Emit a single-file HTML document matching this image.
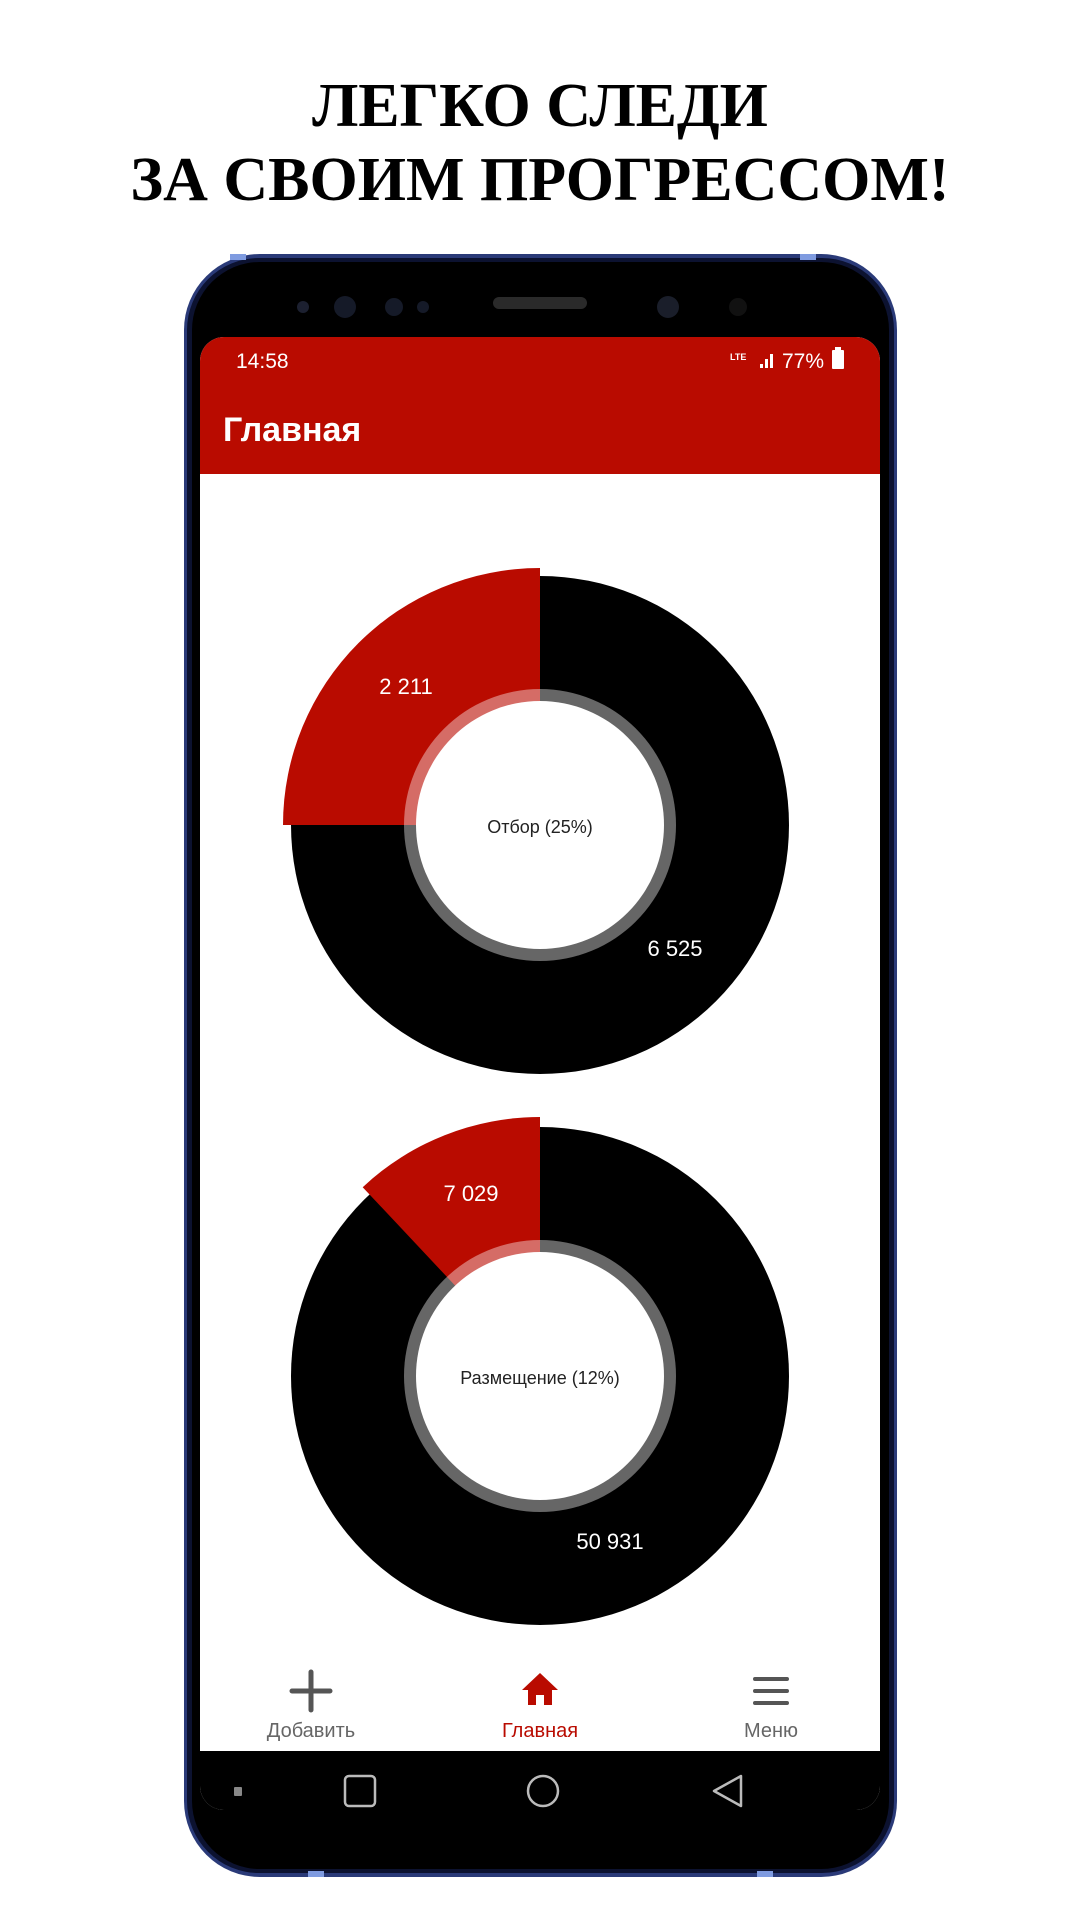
<!DOCTYPE html>
<html><head><meta charset="utf-8"><style>
html,body{margin:0;padding:0;background:#fff;width:1080px;height:1920px;overflow:hidden}
svg{display:block}
</style></head><body>
<svg width="1080" height="1920" viewBox="0 0 1080 1920" xmlns="http://www.w3.org/2000/svg">
<text x="540" y="126" text-anchor="middle" font-family="Liberation Serif, serif" font-weight="bold" font-size="62" fill="#000">ЛЕГКО СЛЕДИ</text>
<text x="540" y="200" text-anchor="middle" font-family="Liberation Serif, serif" font-weight="bold" font-size="62" fill="#000">ЗА СВОИМ ПРОГРЕССОМ!</text>

<rect x="184" y="254" width="713" height="1623" rx="76" fill="#2a3a78"/>
<rect x="187" y="258" width="707" height="1615" rx="72" fill="#0c1230"/>
<rect x="192" y="262" width="697" height="1607" rx="68" fill="#000"/>
<rect x="230" y="254" width="16" height="6" fill="#7f9be0"/>
<rect x="800" y="254" width="16" height="6" fill="#7f9be0"/>
<rect x="308" y="1871" width="16" height="6" fill="#7f9be0"/>
<rect x="757" y="1871" width="16" height="6" fill="#7f9be0"/>
<circle cx="303" cy="307" r="6" fill="#1c2030"/>
<circle cx="345" cy="307" r="11" fill="#151a28"/>
<circle cx="394" cy="307" r="9" fill="#151a28"/>
<circle cx="423" cy="307" r="6" fill="#151a28"/>
<rect x="493" y="297" width="94" height="12" rx="6" fill="#2a2a2a"/>
<circle cx="668" cy="307" r="11" fill="#1a1e2a"/>
<circle cx="738" cy="307" r="9" fill="#111"/>

<defs><clipPath id="scr"><rect x="200" y="337" width="680" height="1473" rx="24"/></clipPath></defs>
<g clip-path="url(#scr)">
<rect x="200" y="337" width="680" height="1473" fill="#fff"/>
<rect x="200" y="337" width="680" height="137" fill="#b90b00"/>
<rect x="200" y="1751" width="680" height="60" fill="#000"/>
</g>
<text x="236" y="368" font-family="Liberation Sans, sans-serif" font-size="21" fill="#fff">14:58</text>
<text x="730" y="360" font-family="Liberation Sans, sans-serif" font-size="9" font-weight="bold" fill="#fff">LTE</text>
<path d="M760 368h3v-4h-3zM765 368h3v-9h-3zM770 368h3v-14h-3z" fill="#fff"/>
<text x="782" y="368" font-family="Liberation Sans, sans-serif" font-size="21" fill="#fff">77%</text>
<rect x="832" y="350" width="12" height="19" rx="1" fill="#fff"/><rect x="835" y="347" width="6" height="4" fill="#fff"/>
<text x="223" y="441" font-family="Liberation Sans, sans-serif" font-weight="bold" font-size="34" fill="#fff">Главная</text>

<circle cx="540" cy="825" r="249" fill="#000"/>
<path d="M540 825 L540 568 A257 257 0 0 0 283 825 Z" fill="#b90b00"/>
<circle cx="540" cy="825" r="136" fill="#fff" fill-opacity="0.4"/>
<circle cx="540" cy="825" r="124" fill="#fff"/>
<text x="406" y="694" text-anchor="middle" font-family="Liberation Sans, sans-serif" font-size="22" fill="#fff">2 211</text>
<text x="675" y="956" text-anchor="middle" font-family="Liberation Sans, sans-serif" font-size="22" fill="#fff">6 525</text>
<text x="540" y="833" text-anchor="middle" font-family="Liberation Sans, sans-serif" font-size="18" fill="#222">Отбор (25%)</text>

<circle cx="540" cy="1376" r="249" fill="#000"/>
<path d="M540 1376 L540 1117 A259 259 0 0 0 362.7 1187.2 Z" fill="#b90b00"/>
<circle cx="540" cy="1376" r="136" fill="#fff" fill-opacity="0.4"/>
<circle cx="540" cy="1376" r="124" fill="#fff"/>
<text x="471" y="1201" text-anchor="middle" font-family="Liberation Sans, sans-serif" font-size="22" fill="#fff">7 029</text>
<text x="610" y="1549" text-anchor="middle" font-family="Liberation Sans, sans-serif" font-size="22" fill="#fff">50 931</text>
<text x="540" y="1384" text-anchor="middle" font-family="Liberation Sans, sans-serif" font-size="18" fill="#222">Размещение (12%)</text>

<path d="M311 1672v38M292 1691h38" stroke="#555" stroke-width="5" stroke-linecap="round"/>
<path d="M540 1673l-18 17h6v15h8v-10h8v10h8v-15h6z" fill="#b90b00"/>
<path d="M755 1679h32M755 1691h32M755 1703h32" stroke="#555" stroke-width="4" stroke-linecap="round"/>
<text x="311" y="1737" text-anchor="middle" font-family="Liberation Sans, sans-serif" font-size="20" fill="#666">Добавить</text>
<text x="540" y="1737" text-anchor="middle" font-family="Liberation Sans, sans-serif" font-size="20" fill="#b90b00">Главная</text>
<text x="771" y="1737" text-anchor="middle" font-family="Liberation Sans, sans-serif" font-size="20" fill="#666">Меню</text>

<rect x="234" y="1787" width="8" height="9" rx="1" fill="#888"/>
<rect x="345" y="1776" width="30" height="30" rx="4" fill="none" stroke="#bbb" stroke-width="2.5"/>
<ellipse cx="543" cy="1791" rx="15" ry="15" fill="none" stroke="#bbb" stroke-width="2.5"/>
<path d="M741 1776 L714 1791 L741 1806 Z" fill="none" stroke="#bbb" stroke-width="2.5" stroke-linejoin="round"/>
</svg>
</body></html>
